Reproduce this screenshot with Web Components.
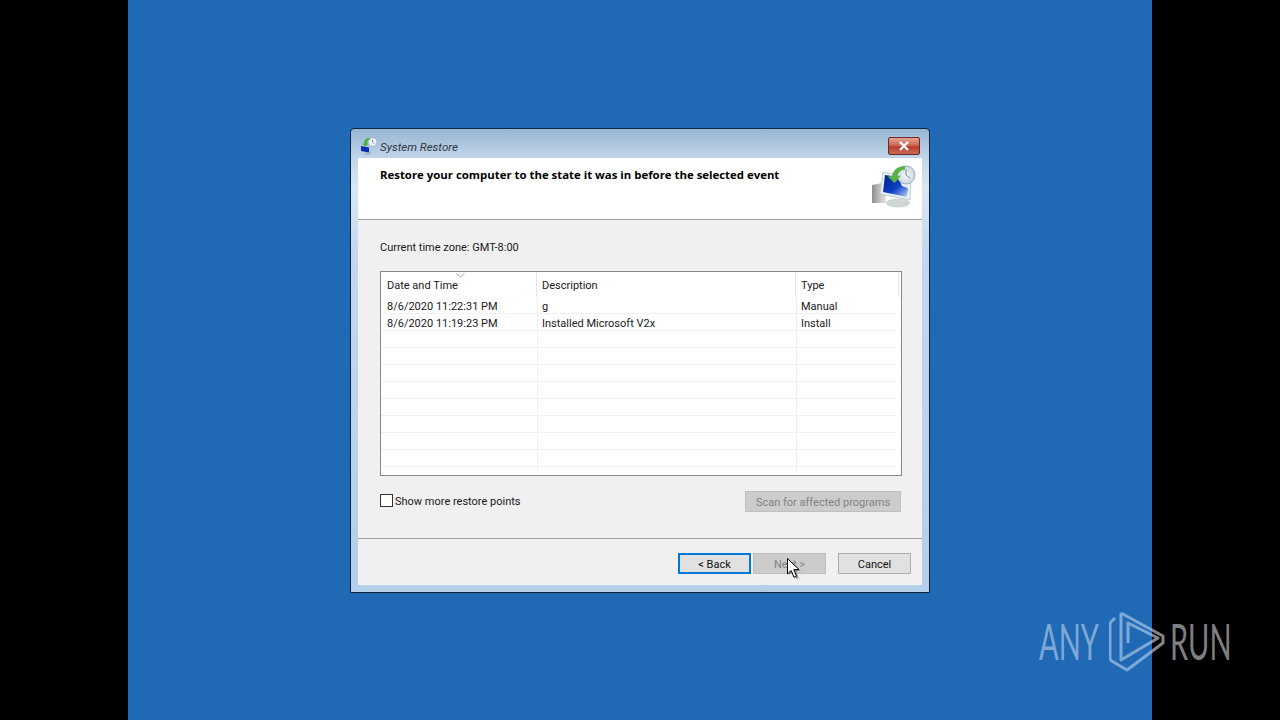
<!DOCTYPE html>
<html>
<head>
<meta charset="utf-8">
<title>System Restore</title>
<style>
  html, body { margin: 0; height: 100%; background: #000; overflow: hidden; }
  body { font: 11px Roboto, "Liberation Sans", sans-serif; color: #1a1a1a; }
</style>
</head>
<body>
<sr-desktop>
  <sr-dialog heading="System Restore">
    <sr-banner heading="Restore your computer to the state it was in before the selected event"></sr-banner>
    <sr-points zone="Current time zone: GMT-8:00"></sr-points>
    <sr-footer>
      <sr-button focused>&lt; Back</sr-button>
      <sr-button disabled>Next &gt;</sr-button>
      <sr-button class="cancel">Cancel</sr-button>
    </sr-footer>
  </sr-dialog>
  <sr-cursor></sr-cursor>
  <sr-watermark></sr-watermark>
</sr-desktop>

<script>
const restoreIcon = `
    <defs>
      <linearGradient id="scr" x1="0" y1="0" x2="1" y2="1">
        <stop offset="0" stop-color="#061f8c"/><stop offset=".55" stop-color="#0c3fc4"/><stop offset=".85" stop-color="#7f9fe6"/><stop offset="1" stop-color="#d5e0f5"/>
      </linearGradient>
      <linearGradient id="tower" x1="0" y1="0" x2="1" y2="0">
        <stop offset="0" stop-color="#8c8c8c"/><stop offset=".5" stop-color="#bdbdbd"/><stop offset="1" stop-color="#e2e2e2"/>
      </linearGradient>
      <radialGradient id="clock"><stop offset="0" stop-color="#f5f8fb"/><stop offset="1" stop-color="#c9d6e0"/></radialGradient>
    </defs>
    <path d="M1 20l14-3v21H1z" fill="url(#tower)"/>
    <ellipse cx="27" cy="38" rx="12" ry="4.5" fill="#cfd6d4"/>
    <path d="M12 7l28 6-1 22-30-6z" fill="#eaf1f4" stroke="#b4c2ca" stroke-width=".8"/>
    <path d="M14 10l13 2 4 9 6 2-1 9-24-5z" fill="url(#scr)"/>
    <circle cx="35" cy="10" r="9" fill="url(#clock)" stroke="#98aab8"/>
    <path d="M35 4v6l4 3" fill="none" stroke="#75899a"/>
    <path d="M21 11c1-6 6-10 13-10v3.500c-4 0-7 3-7.500 6.500l3.500-.5-6.500 7.500-7-6.500z" fill="#56b347"/>`;

// the 16px version in the title bar is a different, simpler drawing
const restoreIconSmall = `
    <ellipse cx="8" cy="16.500" rx="4" ry="1" fill="#a9b4ba"/>
    <path d="M1 9l8 1.500v5L1 14z" fill="#0c2fb0"/>
    <circle cx="12.500" cy="5" r="4.500" fill="#eef3f7" stroke="#8fa4b4" stroke-width=".8"/>
    <path d="M12.500 2.500V5l2 1.500" fill="none" stroke="#6c7f8e" stroke-width=".8"/>
    <path d="M4 6.500C4 3 6 1 9.500 .8v2C8 3 7 4.500 7 6.500l1.500-.2L5.500 10 2.500 6.500z" fill="#4fb03e"/>`;

class SrDesktop extends HTMLElement {
  constructor() {
    super();
    this.attachShadow({ mode: "open" }).innerHTML = `
      <style>
        :host { display: flex; justify-content: center; height: 720px; position: relative; }
        .blue { width: 1024px; height: 720px; background: #1f69b5; display: flex; justify-content: center; padding-top: 128px; box-sizing: border-box; }
      </style>
      <div class="blue"><slot></slot></div>`;
  }
}

class SrDialog extends HTMLElement {
  constructor() {
    super();
    this.attachShadow({ mode: "open" }).innerHTML = `
      <style>
        :host { display: flex; flex-direction: column; width: 580px; height: 465px; box-sizing: border-box;
          border: 1px solid #10233a; border-radius: 4px 4px 0 0;
          background: linear-gradient(#97b5d3 0, #c2d6ea 30px, #d9e7f3 60px, #c3d8ee 120px, #b4cfea 100%); }
        .title { height: 29px; display: flex; align-items: center; padding: 5px 9px 0 9px; box-sizing: border-box; flex: none; }
        .title svg { flex: none; }
        .title > svg { margin: -1px 2px 0 0; }
        .title span { flex: 1; font-style: italic; font-size: 11.5px; color: #2e3640; padding-top: 1px; }
        .close { width: 32px; height: 18px; box-sizing: border-box; border: 1px solid #6e2a22; border-radius: 2px;
          background: linear-gradient(#e2a094 0, #cf6a58 45%, #b83f2c 55%, #c96a58 100%); display: flex; align-items: center; justify-content: center; }
        .client { flex: 1; margin: 0 7px 7px; display: flex; flex-direction: column; background: #f0f0f0; min-height: 0; }
      </style>
      <div class="title">
        <svg viewBox="0 0 18 18" width="18" height="18">${restoreIconSmall}</svg>
        <span></span>
        <div class="close"><svg width="12" height="10" viewBox="0 0 12 10"><path d="M2 1l8 8M10 1l-8 8" stroke="#fff" stroke-width="2.4"/></svg></div>
      </div>
      <div class="client"><slot></slot></div>`;
    this.shadowRoot.querySelector(".title span").textContent = this.getAttribute("heading");
  }
}

class SrBanner extends HTMLElement {
  constructor() {
    super();
    this.attachShadow({ mode: "open" }).innerHTML = `
      <style>
        :host { display: flex; justify-content: space-between; flex: none; height: 62px; box-sizing: border-box; background: #fff;
          border-bottom: 1px solid #a0a0a0; padding: 8px 5px 0 22px; }
        h1 { margin: 0; font: 700 11.4px/17px "Open Sans", sans-serif; color: #000; }
        svg { margin-top: -1px; }
      </style>
      <h1></h1><svg viewBox="0 0 46 46" width="46" height="46">${restoreIcon}</svg>`;
    this.shadowRoot.querySelector("h1").textContent = this.getAttribute("heading");
  }
}

class SrPoints extends HTMLElement {
  constructor() {
    super();
    const data = [
      ["8/6/2020 11:22:31 PM", "g", "Manual"],
      ["8/6/2020 11:19:23 PM", "Installed Microsoft V2x", "Install"]
    ];
    let rows = "";
    for (let i = 0; i < 11; i++) {
      const r = data[i] || ["", "", ""];
      rows += `<div class="row"><span>${r[0]}</span><span>${r[1]}</span><span>${r[2]}</span></div>`;
    }
    this.attachShadow({ mode: "open" }).innerHTML = `
      <style>
        :host { display: flex; flex-direction: column; flex: 1; min-height: 0; padding: 19px 20px 0 22px; border-bottom: 1px solid #a0a0a0; }
        .zone { height: 17px; line-height: 17px; margin-bottom: 15px; }
        .list { height: 205px; box-sizing: border-box; border: 1px solid #828790; background: #fff; position: relative; }
        .head { height: 25px; display: grid; grid-template-columns: 156px 259px 103px; }
        .head span { padding: 4px 0 0 5px; line-height: 19px; border-right: 1px solid #e5e5e5; height: 25px; box-sizing: border-box; }
        .head span:first-child { padding-left: 6px; }
        .arrow { position: absolute; left: 75px; top: 1px; }
        .rows { height: 175px; overflow: hidden; margin-top: 0; }
        .row { height: 17px; box-sizing: border-box; width: 516px; display: grid; grid-template-columns: 157px 259px 100px; border-bottom: 1px solid #f0f0f0; line-height: 19px; }
        .row span { border-right: 1px solid #f0f0f0; padding-left: 5px; white-space: nowrap; height: 17px; overflow: hidden; }
        .row span:first-child { padding-left: 6px; }
        .row span:nth-child(2) { padding-left: 4px; }
        .row span:last-child { border-right: none; padding-left: 4px; }
        .opts { display: flex; justify-content: space-between; align-items: center; margin-top: 15px; height: 21px; padding-right: 1px; }
        .check { display: flex; align-items: flex-start; gap: 2px; line-height: 15px; height: 15px; }
        .box { width: 13px; height: 13px; box-sizing: border-box; border: 1px solid #333; background: #fff; }
      </style>
      <div class="zone"></div>
      <div class="list">
        <div class="head"><span>Date and Time</span><span>Description</span><span>Type</span></div>
        <svg class="arrow" width="9" height="5" viewBox="0 0 9 5"><path d="M.5.5l4 3.5 4-3.5" fill="none" stroke="#9aa3ad"/></svg>
        <div class="rows">${rows}</div>
      </div>
      <div class="opts">
        <div class="check"><div class="box"></div><span>Show more restore points</span></div>
        <sr-button disabled style="width:156px">Scan for affected programs</sr-button>
      </div>`;
    this.shadowRoot.querySelector(".zone").textContent = this.getAttribute("zone");
  }
}

class SrFooter extends HTMLElement {
  constructor() {
    super();
    this.attachShadow({ mode: "open" }).innerHTML = `
      <style>
        :host { display: flex; flex: none; height: 46px; box-sizing: border-box; justify-content: flex-end; gap: 2px; padding: 14px 11px 0 0; }
        ::slotted(.cancel) { margin-left: 10px; }
      </style>
      <slot></slot>`;
  }
}

class SrButton extends HTMLElement {
  constructor() {
    super();
    this.attachShadow({ mode: "open" }).innerHTML = `
      <style>
        :host { display: flex; align-items: center; justify-content: center; width: 73px; height: 21px; box-sizing: border-box; padding-top: 1px;
          background: #e1e1e1; border: 1px solid #adadad; color: #111; white-space: nowrap; }
        :host([focused]) { border: 2px solid #0078d7; }
        :host([disabled]) { background: #cccccc; border-color: #bfbfbf; color: #838383; }
      </style>
      <slot></slot>`;
  }
}

class SrCursor extends HTMLElement {
  constructor() {
    super();
    this.attachShadow({ mode: "open" }).innerHTML = `
      <style>:host { position: absolute; left: 787px; top: 558px; width: 14px; height: 22px; }</style>
      <svg width="14" height="22" viewBox="0 0 14 22">
        <path d="M2 2v15l4-3 3 7 3-1-3-7h5z" fill="#000" opacity=".3"/>
        <path d="M.5.5v15.5l3.7-3.5 2.8 6.8 2.6-1.1-2.8-6.6h5.2z" fill="#fff" stroke="#000"/>
      </svg>`;
  }
}

class SrWatermark extends HTMLElement {
  constructor() {
    super();
    this.attachShadow({ mode: "open" }).innerHTML = `
      <style>
        :host { position: absolute; left: 1039px; top: 610px; width: 195px; height: 64px; display: block; }
        span { position: absolute; top: 0; font: 400 50px/62px Lato, "Open Sans", sans-serif; transform-origin: 0 0; transform: scaleX(.58); white-space: nowrap; }
        .a { left: 0; color: #7ea8d6; }
        .r { left: 131px; color: #7f7f7f; }
        svg { position: absolute; left: 70px; top: 0; }
      </style>
      <span class="a">ANY</span>
      <svg width="60" height="64" viewBox="0 0 60 64" fill="none" stroke-width="3" stroke-linejoin="round">
        <defs>
          <linearGradient id="split" gradientUnits="userSpaceOnUse" x1="0" y1="0" x2="60" y2="0">
            <stop offset=".716" stop-color="#7ea8d6"/><stop offset=".716" stop-color="#858585"/>
          </linearGradient>
        </defs>
        <path d="M6 8L1 13V50" stroke="#7ea8d6"/>
        <path d="M12 3L54 26V33L18 60L1 50" stroke="url(#split)"/>
        <path d="M12 3V50L49 28L19 13V33" stroke="url(#split)"/>
      </svg>
      <span class="r">RUN</span>`;
  }
}

customElements.define("sr-desktop", SrDesktop);
customElements.define("sr-dialog", SrDialog);
customElements.define("sr-banner", SrBanner);
customElements.define("sr-points", SrPoints);
customElements.define("sr-footer", SrFooter);
customElements.define("sr-button", SrButton);
customElements.define("sr-cursor", SrCursor);
customElements.define("sr-watermark", SrWatermark);
</script>
</body>
</html>
